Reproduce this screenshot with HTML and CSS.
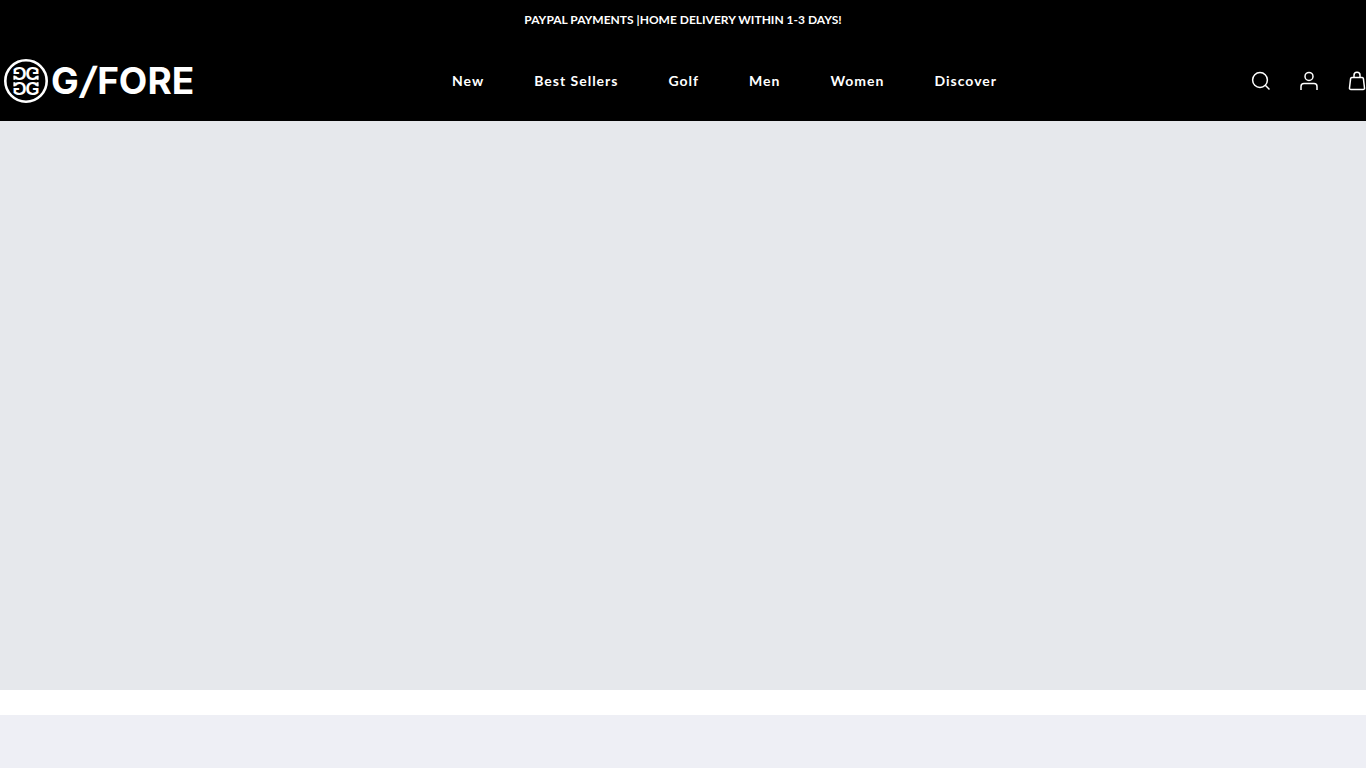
FILE: index.html
```
<!DOCTYPE html>
<html lang="en">
<head>
    <meta charset="UTF-8">
    <meta name="viewport" content="width=device-width, initial-scale=1.0">
    <title>G/FORE</title>
    <link rel="stylesheet" href="styles.css">
</head>
<body>
    <div class="announcement">PAYPAL PAYMENTS |HOME DELIVERY WITHIN 1-3 DAYS!</div>

    <header class="header">
        <a class="logo" href="#">
            <svg class="logo-mark" viewBox="0 -1 44 45" aria-hidden="true">
                <defs>
                    <g id="g">
                        <text x="-0.6" y="13.8">G</text>
                        <rect x="10.6" y="1.2" width="2" height="4.2"/>
                    </g>
                </defs>
                <circle cx="22" cy="22" r="20.7" fill="none" stroke="#fff" stroke-width="2.6"/>
                <g transform="translate(22 22)">
                    <use href="#g"/>
                    <use href="#g" transform="scale(-1 1)"/>
                    <use href="#g" transform="scale(1 -1)"/>
                    <use href="#g" transform="scale(-1 -1)"/>
                </g>
            </svg>
            <span class="logo-name">G<span class="logo-slash">/</span>FORE</span>
        </a>

        <nav class="nav">
            <a href="#">New</a>
            <a href="#">Best Sellers</a>
            <a href="#">Golf</a>
            <a href="#">Men</a>
            <a href="#">Women</a>
            <a href="#">Discover</a>
        </nav>

        <div class="actions">
            <button type="button" aria-label="Search">
                <svg viewBox="0 0 24 24"><circle cx="11" cy="11" r="7.4"/><path d="M16.3 16.3l4.2 4.2"/></svg>
            </button>
            <button type="button" aria-label="Account">
                <svg viewBox="0 0 24 24"><circle cx="12" cy="7.4" r="4"/><path d="M4 21v-3.5a3 3 0 0 1 3-3h10a3 3 0 0 1 3 3V21"/></svg>
            </button>
            <button type="button" aria-label="Cart">
                <svg viewBox="0 0 24 24"><path d="M6.8 8.6h10.4a1.2 1.2 0 0 1 1.2 1l1.1 9.4a1.4 1.4 0 0 1-1.4 1.6H5.9A1.4 1.4 0 0 1 4.5 19l1.1-9.4a1.2 1.2 0 0 1 1.2-1z"/><path d="M9 8.4V6.2a3 3 0 0 1 6 0v2.2"/></svg>
            </button>
        </div>
    </header>

    <main>
        <section class="banner"></section>
        <section class="collection"></section>
    </main>
</body>
</html>
```
FILE: styles.css
```
* {
    box-sizing: border-box;
}

body {
    margin: 0;
    min-height: 100vh;
    display: flex;
    flex-direction: column;
    font-family: Lato, "Liberation Sans", sans-serif;
    background: #fff;
    color: #fff;
    overflow-x: hidden;
}

.announcement {
    background: #000;
    padding: 10px;
    font-size: 12px;
    line-height: 20px;
    font-weight: bold;
    text-align: center;
}

.header {
    background: #000;
    display: flex;
    align-items: center;
    padding: 18px 0;
}

.logo {
    display: flex;
    align-items: center;
    gap: 3px;
    width: 200px;
    padding-left: 4px;
    color: #fff;
    text-decoration: none;
}

.logo-mark {
    flex: none;
    width: 44px;
    height: 45px;
    fill: #fff;
    font-family: "Liberation Sans", sans-serif;
    font-size: 18px;
    font-weight: bold;
}

.logo-name {
    font-family: Inter, "Liberation Sans", sans-serif;
    font-size: 37px;
    line-height: 44px;
    font-weight: bold;
}

.logo-slash {
    font-style: italic;
    padding: 0 2px;
}

.nav {
    flex: 1;
    display: flex;
    justify-content: center;
    gap: 50px;
}

.nav a {
    color: #fff;
    font-size: 14px;
    line-height: 20px;
    font-weight: bold;
    letter-spacing: 1px;
    text-decoration: none;
}

/* the cart sits slightly past the right edge */
.actions {
    display: flex;
    gap: 24px;
    margin-right: -3px;
}

.actions button {
    padding: 0;
    border: none;
    background: none;
    cursor: pointer;
}

.actions svg {
    display: block;
    width: 24px;
    height: 24px;
    fill: none;
    stroke: #fff;
    stroke-width: 1.5;
}

.banner {
    height: calc(100vh - 199px);
    background: #e6e8ec;
}

.collection {
    height: 53px;
    margin-top: 25px;
    background: #eeeff5;
}
```
